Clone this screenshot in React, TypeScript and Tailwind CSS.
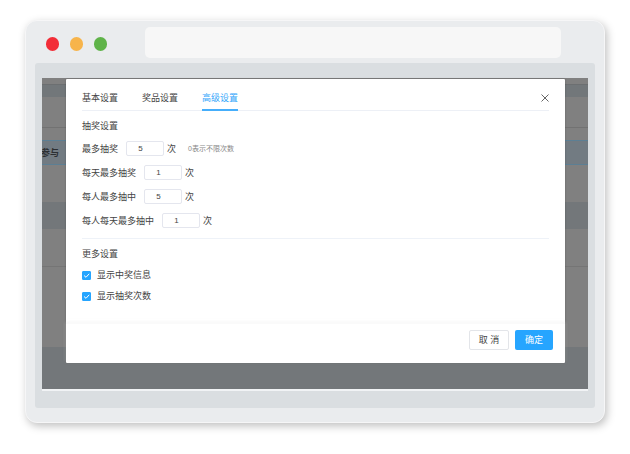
import { useState } from "react";
import type { ReactNode } from "react";

const tabs = ["基本设置", "奖品设置", "高级设置"];

const limits = [
  { id: "max-draws", label: "最多抽奖", value: "5", hint: "0表示不限次数" },
  { id: "daily-draws", label: "每天最多抽奖", value: "1" },
  { id: "max-wins", label: "每人最多抽中", value: "5" },
  { id: "daily-wins", label: "每人每天最多抽中", value: "1" },
];

const options = [
  { id: "show-winners", label: "显示中奖信息" },
  { id: "show-count", label: "显示抽奖次数" },
];

function LimitRow({ id, label, value, hint }: { id: string; label: string; value: string; hint?: string }) {
  const [count, setCount] = useState(value);
  return (
    <div className="flex h-[15px] items-center">
      <label htmlFor={id}>{label}</label>
      <input
        id={id}
        type="text"
        value={count}
        onChange={(e) => setCount(e.target.value)}
        className="ml-2 h-[15px] w-[38px] rounded-[2px] border border-[#e4e6ee] bg-white pr-[9px] text-center text-[8px] text-[#444] outline-none"
      />
      <span className="ml-[3px]">次</span>
      {hint && <span className="ml-3 text-[7px] text-[#888]">{hint}</span>}
    </div>
  );
}

function OptionRow({ id, label }: { id: string; label: string }) {
  const [checked, setChecked] = useState(true);
  return (
    <div className="flex h-3 items-center gap-[6px]">
      <span className="relative flex size-[9px]">
        <input
          id={id}
          type="checkbox"
          checked={checked}
          onChange={(e) => setChecked(e.target.checked)}
          className="size-[9px] appearance-none rounded-[1px] border border-[#26a5ff] bg-white checked:bg-[#26a5ff]"
        />
        <svg viewBox="0 0 9 9" className="pointer-events-none absolute inset-0 size-[9px]" fill="none" stroke="#fff" strokeWidth="1">
          <path d="M2 4.5 L4 6.3 L7.2 2.8" />
        </svg>
      </span>
      <label htmlFor={id}>{label}</label>
    </div>
  );
}

function Backdrop() {
  return (
    <div className="absolute inset-0 flex flex-col overflow-hidden bg-[#808080]">
      <div className="mt-[6px] h-[13px] shrink-0 border-t border-[#6c6f71] bg-[#72777a]" />
      <div className="h-[31px] shrink-0 border-b border-[#727272]" />
      <div className="mt-3 flex h-[25px] shrink-0 items-center border-y border-[#5c7f94] bg-[#727b82] text-[#2c2f32]">
        <span className="-ml-px font-bold">参与</span>
      </div>
      <div className="mt-[37px] h-[27px] shrink-0 bg-[#73777a]" />
      <div className="h-[38px] shrink-0 border-b border-[#757575]" />
      <div className="mt-20 grow bg-[#73777a]" />
    </div>
  );
}

function Section({ title, children, className }: { title: string; children: ReactNode; className: string }) {
  return (
    <section className={className}>
      <h2 className="h-3">{title}</h2>
      {children}
    </section>
  );
}

export default function App() {
  const [active, setActive] = useState(2);
  return (
    <main className="bg-white px-[25px] pt-5 pb-[31px] font-['Liberation_Sans','Noto_Sans_CJK_SC',sans-serif] text-[9px] leading-3 text-[#444]">
      <div className="rounded-[12px] border border-[#f6f6f7] bg-[#eaecee] px-[9px] pb-[14px] shadow-[2px_3px_8px_rgba(0,0,0,0.25)]">
        <div className="flex h-[42px] items-start pr-[34px] pl-[11px]">
          <div className="mt-4 flex gap-[11px]">
            <span className="h-[14px] w-[13px] rounded-full bg-[#f22d37]" />
            <span className="h-[14px] w-[13px] rounded-full bg-[#f7b44b]" />
            <span className="h-[14px] w-[13px] rounded-full bg-[#5fb349]" />
          </div>
          <div className="mt-[6px] ml-[38px] h-[31px] grow rounded-[5px] bg-[#f7f7f7]" />
        </div>

        <div className="rounded-[3px] bg-[#dadee1] px-[7px] pt-[15px] pb-[17px]">
          <div className="relative border-b-2 border-[#f1f3f5] pt-px pr-[23px] pb-[26px] pl-6">
            <Backdrop />
            <div role="dialog" aria-label="高级设置" className="relative rounded-[1px] bg-white shadow-[0_0_2px_rgba(0,0,0,0.25)]">
              <div className="px-4">
                <div className="flex h-8 items-stretch border-b border-[#edf0f6]">
                  <nav className="flex gap-6">
                    {tabs.map((tab, i) => (
                      <button
                        key={tab}
                        type="button"
                        onClick={() => setActive(i)}
                        className={
                          i === active
                            ? "-mb-px border-b-2 border-[#45aefb] pt-2 text-[#33a6fa]"
                            : "-mb-px border-b-2 border-transparent pt-2"
                        }
                      >
                        {tab}
                      </button>
                    ))}
                  </nav>
                  <button type="button" aria-label="关闭" className="ml-auto flex items-center pt-[6px]">
                    <svg viewBox="0 0 8 8" className="size-2" fill="none" stroke="#666" strokeWidth="1">
                      <path d="M0.5 0.5 L7.5 7.5 M7.5 0.5 L0.5 7.5" />
                    </svg>
                  </button>
                </div>

                <Section title="抽奖设置" className="border-b border-[#eef2f8] pt-[9px] pb-[10px]">
                  <div className="mt-[9px] flex flex-col gap-[9px]">
                    {limits.map((row) => (
                      <LimitRow key={row.id} {...row} />
                    ))}
                  </div>
                </Section>

                <Section title="更多设置" className="pt-[9px] pb-[21px]">
                  <div className="mt-[9px] flex flex-col gap-[9px]">
                    {options.map((row) => (
                      <OptionRow key={row.id} {...row} />
                    ))}
                  </div>
                </Section>
              </div>

              <div className="flex h-10 items-start justify-end gap-[6px] border-t border-[#fafafa] pt-[6px] pr-3 shadow-[0_-1px_3px_rgba(230,230,230,0.35)]">
                <button type="button" className="h-5 w-10 rounded-[2px] border border-[#e3e5e9] bg-white">
                  取 消
                </button>
                <button type="button" className="h-5 w-[38px] rounded-[2px] bg-[#26a5ff] text-white">
                  确定
                </button>
              </div>
            </div>
          </div>
        </div>
      </div>
    </main>
  );
}
